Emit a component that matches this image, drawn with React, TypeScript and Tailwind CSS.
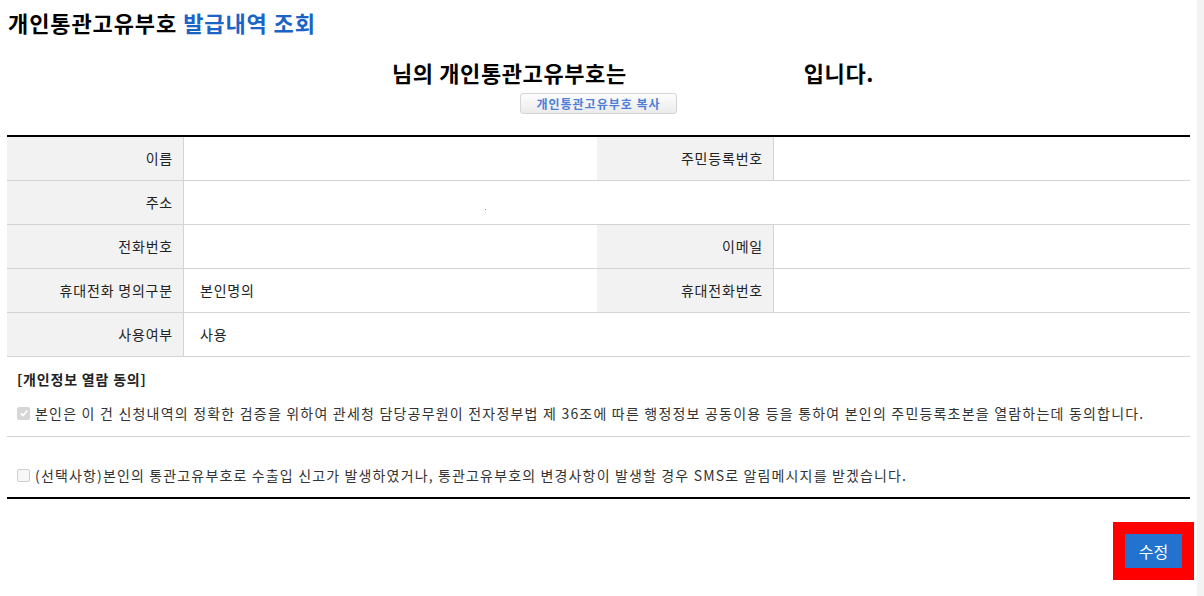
import React from 'react';

const font = { fontFamily: '"Noto Sans CJK KR", "Noto Sans", sans-serif' };

interface CheckProps {
  checked?: boolean;
}

const FakeCheck: React.FC<CheckProps> = ({ checked }) =>
  checked ? (
    <span className="w-[13px] h-[13px] rounded-[2px] bg-[#d6d6d6] flex items-center justify-center shrink-0">
      <svg viewBox="0 0 12 12" className="w-[10px] h-[10px]" fill="none" stroke="#ffffff" strokeWidth="2">
        <path d="M2 6.5 L5 9 L10 3" />
      </svg>
    </span>
  ) : (
    <span className="w-[13px] h-[13px] rounded-[2px] border border-[#cfcfcf] bg-[#f7f7f7] shrink-0" />
  );

const Label: React.FC<{ children?: React.ReactNode }> = ({ children }) => (
  <div className="w-[177px] shrink-0 bg-[#f2f2f2] border-r border-[#d4d4d4] flex items-center justify-end pr-[10px] text-[14px] tracking-[0.8px] text-[#222]">
    {children}
  </div>
);

const Value: React.FC<{ children?: React.ReactNode; wide?: boolean }> = ({ children, wide }) => (
  <div className={wide ? 'flex-1 flex items-center pl-[16px] text-[14px] tracking-[0.8px] text-[#222]' : 'w-[413px] shrink-0 flex items-center pl-[16px] text-[14px] tracking-[0.8px] text-[#222]'}>
    {children}
  </div>
);

const App: React.FC = () => {
  return (
    <div className="flex w-[1204px] h-[596px] bg-white overflow-hidden" style={font}>
      <div className="w-[1197px] shrink-0 flex flex-col">
        {/* Title */}
        <div className="h-[44px] flex items-center pl-[8px] text-[22px] font-bold tracking-[0.9px]">
          <span className="text-black">개인통관고유부호</span>
          <span className="text-[#1b63c6] ml-[6px]">발급내역 조회</span>
        </div>

        {/* Headline */}
        <div className="mt-[10px] h-[36px] flex justify-center items-center text-[22px] font-bold tracking-[0.6px] text-black">
          <span className="w-[69px]" />
          <span>님의 개인통관고유부호는</span>
          <span className="w-[177px]" />
          <span>입니다.</span>
        </div>
        <div className="mt-[3px] flex justify-center">
          <button className="w-[157px] h-[21px] rounded-[3px] border border-[#d6d6d6] bg-gradient-to-b from-[#fdfdfd] to-[#ebebeb] text-[12px] font-bold tracking-[1px] text-[#4d7fd8] leading-none">
            개인통관고유부호 복사
          </button>
        </div>

        {/* Table */}
        <div className="mt-[21px] mx-[7px] border-t-2 border-black">
          <div className="h-[44px] flex border-b border-[#d4d4d4]">
            <Label>이름</Label>
            <Value />
            <Label>주민등록번호</Label>
            <Value wide />
          </div>
          <div className="h-[44px] flex border-b border-[#d4d4d4]">
            <Label>주소</Label>
            <Value wide>
              <span className="ml-[285px] mt-[14px] w-[1px] h-[1px] bg-[#888]" />
            </Value>
          </div>
          <div className="h-[44px] flex border-b border-[#d4d4d4]">
            <Label>전화번호</Label>
            <Value />
            <Label>이메일</Label>
            <Value wide />
          </div>
          <div className="h-[44px] flex border-b border-[#d4d4d4]">
            <Label>휴대전화 명의구분</Label>
            <Value>본인명의</Value>
            <Label>휴대전화번호</Label>
            <Value wide />
          </div>
          <div className="h-[44px] flex border-b border-[#d4d4d4]">
            <Label>사용여부</Label>
            <Value wide>사용</Value>
          </div>
        </div>

        {/* Consent */}
        <div className="mx-[7px] border-b-2 border-black">
          <div className="h-[44px] flex items-center pl-[10px] text-[14px] tracking-[0.8px] font-bold text-[#222]">[개인정보 열람 동의]</div>
          <div className="border-b border-[#d4d4d4] pb-[11px]">
            <div className="h-[24px] flex items-center gap-[5px] pl-[10px] text-[14px] text-[#333] tracking-[1.2px]">
              <FakeCheck checked />
              <span>본인은 이 건 신청내역의 정확한 검증을 위하여 관세청 담당공무원이 전자정부법 제 36조에 따른 행정정보 공동이용 등을 통하여 본인의 주민등록초본을 열람하는데 동의합니다.</span>
            </div>
          </div>
          <div className="pt-[28px] pb-[12px]">
            <div className="h-[20px] flex items-center gap-[5px] pl-[10px] text-[14px] text-[#333] tracking-[1.15px]">
              <FakeCheck />
              <span>(선택사항)본인의 통관고유부호로 수출입 신고가 발생하였거나, 통관고유부호의 변경사항이 발생할 경우 SMS로 알림메시지를 받겠습니다.</span>
            </div>
          </div>
        </div>

        {/* Action */}
        <div className="mt-[23px] flex justify-end pr-[3px]">
          <div className="bg-[#ff0000] p-[12px]">
            <button className="w-[57px] h-[34px] bg-[#2272d0] text-white text-[16px] flex items-center justify-center">수정</button>
          </div>
        </div>
      </div>
      <div className="flex-1 bg-[#f3f3f3]" />
    </div>
  );
};

export default App;
